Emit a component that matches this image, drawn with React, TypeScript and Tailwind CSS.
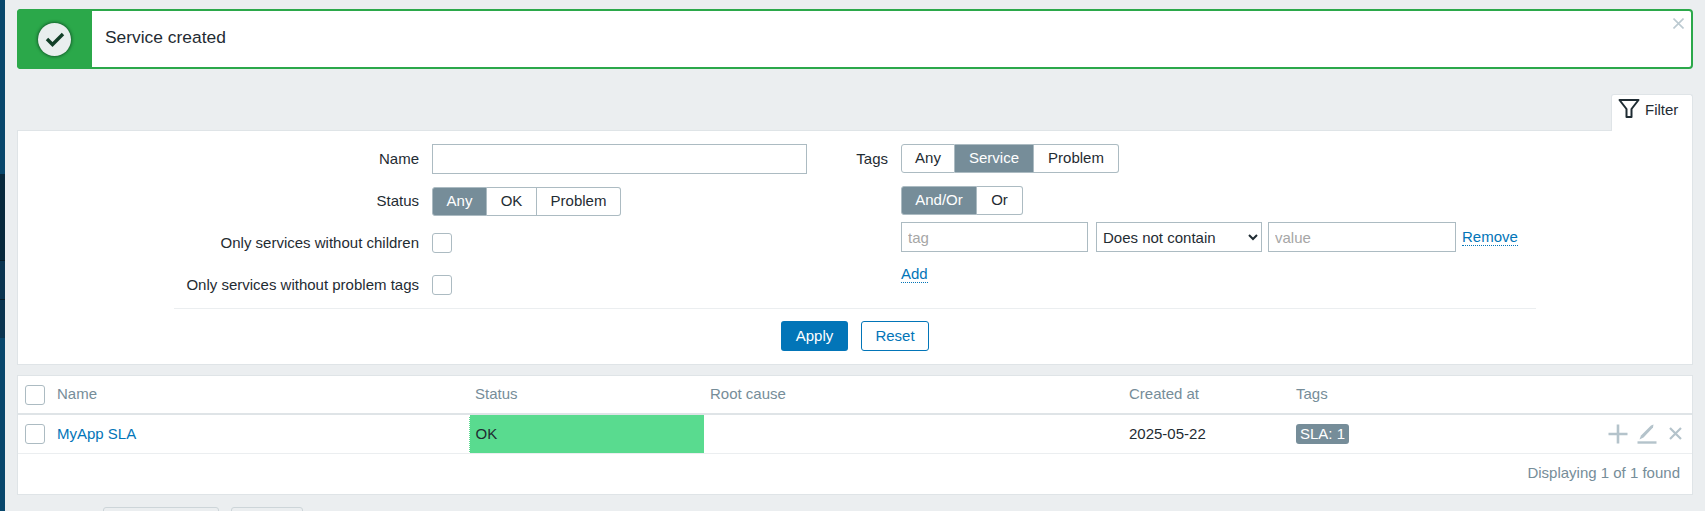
import React from 'react';

const FONT = "font-['Liberation_Sans',Arial,sans-serif]";

const Segmented = ({ items, active, h }: { items: { label: string; w: string }[]; active: string; h: string }) => (
  <div className={`flex ${h}`}>
    {items.map((item, i) => (
      <div
        key={item.label}
        className={`${item.w} flex items-center justify-center border-y border-r border-[#acbbc2] ${i === 0 ? 'border-l rounded-l-[3px]' : ''} ${
          i === items.length - 1 ? 'rounded-r-[3px]' : ''
        } ${item.label === active ? 'bg-[#768d99] border-[#768d99] text-white' : 'bg-white text-[#1f2c33]'}`}
      >
        {item.label}
      </div>
    ))}
  </div>
);

const Checkbox = () => <div className="w-5 h-5 bg-white border border-[#acbbc2] rounded-[3px]" />;

const inputClass =
  'h-[30px] bg-white border border-[#acbbc2] px-[6px] text-[15px] outline-none placeholder:text-[#a6a6a6]';

const FormRow = ({ label, className, children }: { label: string; className: string; children: React.ReactNode }) => (
  <div className={`flex items-center ${className}`}>
    <div className="w-[401px] text-right shrink-0 text-[#1f2c33]">{label}</div>
    <div className="ml-[13px]">{children}</div>
  </div>
);

export default function App() {
  return (
    <div className={`${FONT} flex h-[511px] w-[1705px] overflow-hidden bg-[#ebeef0] text-[15px] text-[#1f2c33]`}>
      {/* sidebar sliver */}
      <div className="w-[5px] shrink-0 flex flex-col bg-[#08476c]">
        <div className="h-[174px]" />
        <div className="h-[87px] bg-[#07283c] border-b border-[#061c29]" />
        <div className="h-[39px] bg-[#0a3450] border-b border-[#061c29]" />
        <div className="h-[38px] bg-[#0a3450]" />
      </div>

      <div className="flex-1 pl-[12px] pr-[12px] pt-[9px] min-w-0">
        {/* success message */}
        <div className="relative flex h-[60px] rounded-[4px] border-2 border-[#2ba84a] bg-white">
          <div className="w-[75px] -ml-[2px] -my-[2px] h-[60px] rounded-l-[4px] bg-[#2ba84a] flex items-center justify-center shrink-0">
            <div className="w-[33px] h-[33px] rounded-full bg-[#e9eeee] shadow-[0_0_3px_1px_rgba(10,60,30,0.65)] flex items-center justify-center">
              <svg width="20" height="16" viewBox="0 0 20 16" fill="none">
                <path d="M2 8 L7.5 13.5 L18 3" stroke="#123f27" strokeWidth="3.4" />
              </svg>
            </div>
          </div>
          <div className="pl-[13px] flex items-center text-[17.4px] text-[#1f2c33] pb-[3px]">Service created</div>
          <svg className="absolute top-[7px] right-[7px]" width="11" height="11" viewBox="0 0 11 11" fill="none">
            <path d="M0.5 0.5 L10.5 10.5 M10.5 0.5 L0.5 10.5" stroke="#bccad1" strokeWidth="1.6" />
          </svg>
        </div>

        {/* filter tab */}
        <div className="mt-[25px] flex justify-end">
          <div className="relative z-10 w-[82px] h-[37px] -mb-px bg-white border-t border-x border-[#dfe4e7] rounded-t-[3px] flex items-start pl-[6px] pt-[3px] gap-[5px]">
            <svg width="22" height="21" viewBox="0 0 22 21" fill="none" className="shrink-0">
              <path d="M1.5 2 H20.5 L13.5 11 V19 H8.5 V11 Z" stroke="#1f2c33" strokeWidth="2" strokeLinejoin="round" />
            </svg>
            <span className="leading-[21px] mt-[1px]">Filter</span>
          </div>
        </div>

        {/* filter panel */}
        <div className="h-[235px] bg-white border border-[#dfe4e7] pt-[13px]">
          <div className="flex h-[164px]">
            <div className="w-[790px] shrink-0">
              <FormRow label="Name" className="h-[30px]">
                <input readOnly className={`${inputClass} w-[375px]`} />
              </FormRow>
              <FormRow label="Status" className="h-[30px] mt-[12px]">
                <Segmented
                  h="h-[29px]"
                  active="Any"
                  items={[
                    { label: 'Any', w: 'w-[55px]' },
                    { label: 'OK', w: 'w-[50px]' },
                    { label: 'Problem', w: 'w-[84px]' },
                  ]}
                />
              </FormRow>
              <FormRow label="Only services without children" className="h-[30px] mt-[12px]">
                <Checkbox />
              </FormRow>
              <FormRow label="Only services without problem tags" className="h-[30px] mt-[12px]">
                <Checkbox />
              </FormRow>
            </div>

            <div className="flex">
              <div className="w-[80px] text-right leading-[29px] shrink-0">Tags</div>
              <div className="ml-[13px]">
                <Segmented
                  h="h-[29px]"
                  active="Service"
                  items={[
                    { label: 'Any', w: 'w-[54px]' },
                    { label: 'Service', w: 'w-[79px]' },
                    { label: 'Problem', w: 'w-[85px]' },
                  ]}
                />
                <div className="mt-[13px]">
                  <Segmented
                    h="h-[29px]"
                    active="And/Or"
                    items={[
                      { label: 'And/Or', w: 'w-[76px]' },
                      { label: 'Or', w: 'w-[46px]' },
                    ]}
                  />
                </div>
                <div className="mt-[7px] flex items-center">
                  <input readOnly placeholder="tag" className={`${inputClass} w-[187px]`} />
                  <select
                    defaultValue="Does not contain"
                    className="ml-[8px] h-[30px] w-[166px] bg-white border border-[#acbbc2] px-[2px] text-[15px] outline-none"
                  >
                    <option>Does not contain</option>
                  </select>
                  <input readOnly placeholder="value" className={`${inputClass} ml-[6px] w-[188px]`} />
                  <a className="ml-[6px] text-[#0275b8] border-b border-dotted border-[#0275b8] leading-[16px]">Remove</a>
                </div>
                <div className="mt-[14px] flex">
                  <a className="text-[#0275b8] border-b border-dotted border-[#0275b8] leading-[16px]">Add</a>
                </div>
              </div>
            </div>
          </div>

          <div className="mx-[156px] border-t border-[#ebeef0] pt-[12px] flex justify-center gap-[13px]">
            <button className="w-[67px] h-[30px] bg-[#0275b8] text-white rounded-[3px]">Apply</button>
            <button className="w-[68px] h-[30px] bg-white text-[#0275b8] border border-[#0275b8] rounded-[3px]">Reset</button>
          </div>
        </div>

        {/* services table */}
        <div className="mt-[10px] bg-white border border-[#dfe4e7]">
          <table className="w-full table-fixed border-collapse">
            <colgroup>
              <col className="w-[33px]" />
              <col className="w-[418px]" />
              <col className="w-[235px]" />
              <col className="w-[419px]" />
              <col className="w-[167px]" />
              <col className="w-[310px]" />
              <col />
            </colgroup>
            <thead>
              <tr className="h-[38px] border-b-2 border-[#dfe4e7] text-left text-[#768d99]">
                <th className="pl-[7px] font-normal"><Checkbox /></th>
                <th className="px-[6px] font-normal">Name</th>
                <th className="px-[6px] font-normal">Status</th>
                <th className="px-[6px] font-normal">Root cause</th>
                <th className="px-[6px] font-normal">Created at</th>
                <th className="px-[6px] font-normal">Tags</th>
                <th />
              </tr>
            </thead>
            <tbody>
              <tr className="h-[39px] border-b border-[#ebeef0]">
                <td className="pl-[7px]"><Checkbox /></td>
                <td className="px-[6px] text-[#0275b8]">MyApp SLA</td>
                <td className="px-[6px] bg-[#59db8f] border-l border-dotted border-white">OK</td>
                <td className="px-[6px]" />
                <td className="px-[6px]">2025-05-22</td>
                <td className="px-[6px]">
                  <span className="inline-block h-5 leading-5 px-[4px] bg-[#768d99] text-white rounded-[3px]">SLA: 1</span>
                </td>
                <td>
                  <div className="flex items-center justify-end gap-[9px] pr-[10px]">
                    <svg width="20" height="20" viewBox="0 0 20 20" fill="none">
                      <path d="M10 0.5 V19.5 M0.5 10 H19.5" stroke="#b4c3cb" strokeWidth="2.6" />
                    </svg>
                    <svg width="20" height="20" viewBox="0 0 20 20" fill="none">
                      <path d="M2.5 15.5 L4 11.5 L14 1.5 L16.5 0.5 L16 3.5 L6.5 13.5 Z" fill="#b4c3cb" />
                      <path d="M0.5 18.5 H19.5" stroke="#b4c3cb" strokeWidth="2.4" />
                    </svg>
                    <svg width="13" height="13" viewBox="0 0 13 13" fill="none" className="ml-[3px]">
                      <path d="M1 1 L12 12 M12 1 L1 12" stroke="#b4c3cb" strokeWidth="2.2" />
                    </svg>
                  </div>
                </td>
              </tr>
            </tbody>
          </table>
          <div className="h-[40px] flex items-center justify-end pr-[12px] text-[#768d99]">Displaying 1 of 1 found</div>
        </div>

        {/* mass action buttons, cut off by the window */}
        <div className="mt-[12px] ml-[86px] flex gap-[12px]">
          <div className="w-[116px] h-[30px] border border-[#cdd5d9] rounded-[3px]" />
          <div className="w-[72px] h-[30px] border border-[#cdd5d9] rounded-[3px]" />
        </div>
      </div>
    </div>
  );
}
